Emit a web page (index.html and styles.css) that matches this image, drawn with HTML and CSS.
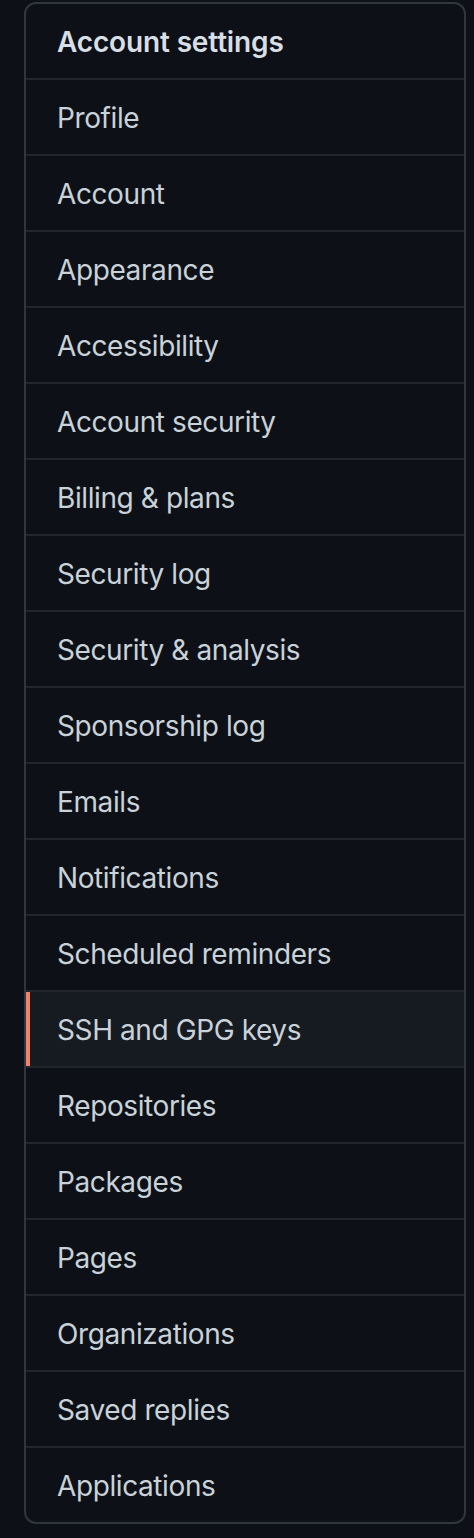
FILE: index.html
```html
<!DOCTYPE html>
<html>
<head>
<meta charset="utf-8">
<link rel="stylesheet" href="styles.css">
</head>
<body>
<nav class="menu">
  <h3 class="menu-heading">Account settings</h3>
  <a class="menu-item" href="#">Profile</a>
  <a class="menu-item" href="#">Account</a>
  <a class="menu-item" href="#">Appearance</a>
  <a class="menu-item" href="#">Accessibility</a>
  <a class="menu-item" href="#">Account security</a>
  <a class="menu-item" href="#">Billing &amp; plans</a>
  <a class="menu-item" href="#">Security log</a>
  <a class="menu-item" href="#">Security &amp; analysis</a>
  <a class="menu-item" href="#">Sponsorship log</a>
  <a class="menu-item" href="#">Emails</a>
  <a class="menu-item" href="#">Notifications</a>
  <a class="menu-item" href="#">Scheduled reminders</a>
  <a class="menu-item selected" href="#">SSH and GPG keys</a>
  <a class="menu-item" href="#">Repositories</a>
  <a class="menu-item" href="#">Packages</a>
  <a class="menu-item" href="#">Pages</a>
  <a class="menu-item" href="#">Organizations</a>
  <a class="menu-item" href="#">Saved replies</a>
  <a class="menu-item" href="#">Applications</a>
</nav>
</body>
</html>
```
FILE: styles.css
```css
html, body {
  background: #0d1117;
}
body {
  margin: 2px 8px 0 24px;
  font-family: Inter, "Liberation Sans", sans-serif;
}
.menu {
  display: flex;
  flex-direction: column;
  border: 2px solid #30363d;
  border-radius: 12px;
  overflow: hidden;
  background: #0d1117;
}
.menu-heading {
  margin: 0;
  padding: 17px 32px 15px 31px;
  font-size: 28px;
  line-height: 42px;
  font-weight: 600;
  letter-spacing: -0.15px;
  color: #d8dee5;
  border-bottom: 2px solid #21262d;
}
.menu-item {
  position: relative;
  display: block;
  padding: 17px 32px 15px 31px;
  font-size: 28px;
  line-height: 42px;
  letter-spacing: -0.4px;
  color: #c9d1d9;
  text-decoration: none;
  border-bottom: 2px solid #21262d;
}
.menu-item:last-child {
  border-bottom: none;
}
.menu-item.selected {
  background: #161b22;
}
.menu-item.selected::before {
  content: "";
  position: absolute;
  left: 0;
  top: 0;
  bottom: 0;
  width: 4px;
  background: #f78166;
}
```
